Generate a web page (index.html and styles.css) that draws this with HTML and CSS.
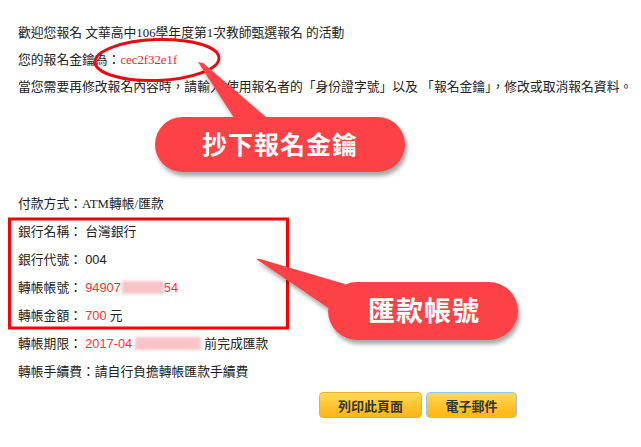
FILE: index.html
```html
<!DOCTYPE html>
<html lang="zh-Hant">
<head>
<meta charset="utf-8">
<title>報名完成</title>
<link rel="stylesheet" href="styles.css">
</head>
<body>
<div class="page">
  <div class="intro">
    <div class="line">歡迎您報名 文華高中106學年度第1次教師甄選報名 的活動</div>
    <div class="line">您的報名金鑰為：<span class="key">cec2f32e1f</span></div>
    <div class="line">當您需要再修改報名內容時，請輸入 使用報名者的「身份證字號」以及 「報名金鑰」，修改或取消報名資料。</div>
  </div>
  <div class="payment">
    <div class="row">付款方式：<span class="latin">ATM</span>轉帳/匯款</div>
    <div class="row">銀行名稱： 台灣銀行</div>
    <div class="row">銀行代號： <span class="num">004</span></div>
    <div class="row">轉帳帳號： <span class="num red">94907</span><span class="blur blur-acct"></span><span class="num red">54</span></div>
    <div class="row">轉帳金額： <span class="num red">700</span> 元</div>
    <div class="row">轉帳期限： <span class="num red">2017-04</span><span class="blur blur-date"></span> 前完成匯款</div>
    <div class="row">轉帳手續費：請自行負擔轉帳匯款手續費</div>
  </div>
  <div class="actions">
    <button class="btn btn-print">列印此頁面</button>
    <button class="btn btn-mail">電子郵件</button>
  </div>

  <svg class="notes" width="641" height="447" viewBox="0 0 641 447">
    <defs>
      <filter id="sh" x="-20%" y="-20%" width="140%" height="160%">
        <feDropShadow dx="2" dy="4" stdDeviation="2" flood-color="#000" flood-opacity="0.35"/>
      </filter>
    </defs>
    <ellipse cx="157" cy="60" rx="62" ry="20.5" transform="rotate(-2 157 60)" fill="none" stroke="#ea0a12" stroke-width="3"/>
    <rect x="9.5" y="219" width="278" height="109" fill="none" stroke="#ff0000" stroke-width="3"/>
    <g filter="url(#sh)" fill="#fd4346">
      <polygon points="198,62 203,63 274,124 238,124"/>
      <rect x="155" y="117" width="250" height="55" rx="27.5"/>
    </g>
    <g filter="url(#sh)" fill="#fd4346">
      <polygon points="256,259 260,259 345,284 340,316"/>
      <rect x="328" y="282" width="190" height="58" rx="29"/>
    </g>
    <text class="callout-text" x="280" y="154" text-anchor="middle">抄下報名金鑰</text>
    <text class="callout-text big" x="424" y="321" text-anchor="middle">匯款帳號</text>
  </svg>
</div>
</body>
</html>
```

FILE: styles.css
```css
html, body {
  margin: 0;
  padding: 0;
  background: #ffffff;
}

body {
  font-family: "Liberation Serif", "Noto Sans CJK TC", serif;
  font-size: 12.8px;
  color: #222222;
}

.page {
  position: relative;
  width: 641px;
  height: 447px;
  overflow: hidden;
  padding-left: 18px;
  padding-top: 20px;
  box-sizing: border-box;
}

.line {
  height: 27px;
  line-height: 27px;
  white-space: nowrap;
}

.key {
  color: #f5222a;
}

.payment {
  margin-top: 89px;
}

.row {
  height: 28px;
  line-height: 28px;
  white-space: nowrap;
}

.num {
  font-family: "Liberation Sans", "Noto Sans CJK TC", sans-serif;
  font-size: 12.8px;
}

.red {
  color: #ff2f36;
}

.blur {
  display: inline-block;
  height: 13px;
  vertical-align: -2px;
  background: #f9c4c8;
  filter: blur(1.5px);
}

.blur-acct {
  width: 42px;
  margin-left: 1px;
}

.blur-date {
  width: 66px;
  margin-left: 3px;
}

.actions {
  display: flex;
  gap: 4px;
  margin-top: 6px;
  margin-left: 301px;
}

.btn {
  height: 26px;
  padding: 0;
  border: 1px solid #f1ad2c;
  border-radius: 4px;
  background: linear-gradient(#ffdb55, #ffc12a 60%, #ffb616);
  font-family: "Liberation Serif", "Noto Sans CJK TC", serif;
  font-size: 13px;
  font-weight: bold;
  color: #333333;
}

.btn-print {
  width: 103px;
}

.btn-mail {
  width: 91px;
  border-color: #9ec3ee;
}

.notes {
  position: absolute;
  left: 0;
  top: 0;
}

.callout-text {
  font-family: "Noto Sans CJK TC", sans-serif;
  font-weight: bold;
  font-size: 25px;
  letter-spacing: 1px;
  fill: #ffffff;
}

.callout-text.big {
  font-size: 27px;
  letter-spacing: 1px;
}
```
